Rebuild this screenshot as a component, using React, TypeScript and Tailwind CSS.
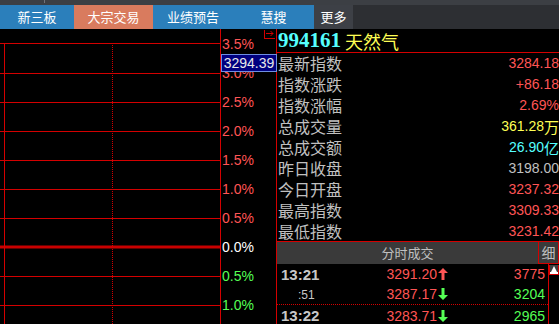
import React from "react";

const RED = "#d40000";

const tabs = [
  { name: "新三板", w: "w-[74px]", bg: "bg-[#2b7fbb]" },
  { name: "大宗交易", w: "w-[79px]", bg: "bg-[#d97b5e]" },
  { name: "业绩预告", w: "w-[80px]", bg: "bg-[#2b7fbb]" },
  { name: "慧搜", w: "w-[81px]", bg: "bg-[#2b7fbb]" },
  { name: "更多", w: "w-[39px]", bg: "bg-[#3d4046]" },
];

const axis = [
  { t: "3.5%", c: "text-[#ff5555]" },
  { t: "3.0%", c: "text-[#ff5555]" },
  { t: "2.5%", c: "text-[#ff5555]" },
  { t: "2.0%", c: "text-[#ff5555]" },
  { t: "1.5%", c: "text-[#ff5555]" },
  { t: "1.0%", c: "text-[#ff5555]" },
  { t: "0.5%", c: "text-[#ff5555]" },
  { t: "0.0%", c: "text-white" },
  { t: "0.5%", c: "text-[#55ff55]" },
  { t: "1.0%", c: "text-[#55ff55]" },
];

const stats = [
  { k: "最新指数", v: "3284.18", c: "text-[#ff5555]" },
  { k: "指数涨跌", v: "+86.18", c: "text-[#ff5555]" },
  { k: "指数涨幅", v: "2.69%", c: "text-[#ff5555]" },
  { k: "总成交量", v: "361.28", u: "万", c: "text-[#ffff55]" },
  { k: "总成交额", v: "26.90", u: "亿", c: "text-[#55ffff]" },
  { k: "昨日收盘", v: "3198.00", c: "text-[#c0c0c0]" },
  { k: "今日开盘", v: "3237.32", c: "text-[#ff5555]" },
  { k: "最高指数", v: "3309.33", c: "text-[#ff5555]" },
  { k: "最低指数", v: "3231.42", c: "text-[#ff5555]" },
];

const trades = [
  { time: "13:21", price: "3291.20", up: true, vol: "3775", volC: "text-[#ff5555]", h: "h-[20px]" },
  { time: ":51", small: true, price: "3287.17", up: false, vol: "3204", volC: "text-[#55ff55]", h: "h-[21px] border-b border-dotted border-[#d40000]" },
  { time: "13:22", price: "3283.71", up: false, vol: "2965", volC: "text-[#55ff55]", h: "h-[21px]" },
];

function Arrow({ up }: { up: boolean }) {
  const color = up ? "#ff5555" : "#55ff55";
  return (
    <svg width="10" height="12" viewBox="0 0 10 12">
      {up ? (
        <path d="M5 0 L10 5 L6.5 5 L6.5 12 L3.5 12 L3.5 5 L0 5 Z" fill={color} />
      ) : (
        <path d="M3.5 0 L6.5 0 L6.5 7 L10 7 L5 12 L0 7 L3.5 7 Z" fill={color} />
      )}
    </svg>
  );
}

function ChartGrid() {
  const ys = [14, 44, 73, 102, 131, 160, 189, 247, 276];
  return (
    <svg width="220" height="295" className="block shrink-0">
      {ys.map((y) => (
        <line key={y} x1="0" x2="220" y1={y + 0.5} y2={y + 0.5} stroke={RED} strokeWidth="1" />
      ))}
      <line x1="0" x2="220" y1="218" y2="218" stroke="#c80000" strokeWidth="3" />
      <line x1="4.5" x2="4.5" y1="14" y2="295" stroke={RED} strokeWidth="1" />
      <line x1="112.5" x2="112.5" y1="14" y2="295" stroke={RED} strokeWidth="1" strokeDasharray="1 1" />
    </svg>
  );
}

export default function App() {
  return (
    <div className="w-[559px] h-[324px] bg-black overflow-hidden flex flex-col font-['Liberation_Sans','Noto_Sans_CJK_SC',sans-serif]">
      <div className="h-[5px] bg-[#3c3f44] shrink-0 flex">
        <div className="ml-[44px] w-px h-[3px] bg-[#70737a]" />
      </div>
      <div className="h-[24px] shrink-0 flex bg-[#2d2f33] text-[13px] text-white font-['Noto_Sans_CJK_SC',sans-serif]">
        {tabs.map((t) => (
          <div key={t.name} className={`${t.w} ${t.bg} flex items-center justify-center`}>
            {t.name}
          </div>
        ))}
      </div>

      <div className="flex flex-1 min-h-0">
        <ChartGrid />

        <div className="relative w-[56px] shrink-0 border-l border-[#d40000] flex flex-col text-[14px] leading-none">
          {axis.map((a, i) => (
            <div key={i} className={`h-[29px] flex items-center pl-[1px] ${a.c}`}>
              {a.t}
            </div>
          ))}
          <div className="absolute right-[1px] top-[1px] w-[11px] h-[9px] border-l border-b border-[#d40000]">
            <svg width="10" height="8" viewBox="0 0 10 8" className="block">
              <path d="M1 3.5 H8 M5.5 1 L8 3.5 L5.5 6" stroke={RED} strokeWidth="1" fill="none" />
            </svg>
          </div>
          <div className="absolute left-0 top-[25px] w-[56px] h-[18px] bg-[#000080] border border-[#6f8fe0] flex items-center justify-center text-[14px] text-[#e8e8e8]">
            3294.39
          </div>
        </div>

        <div className="flex-1 min-w-0 border-l border-[#d40000] flex flex-col">
          <div className="h-[24px] shrink-0 border-b border-[#d40000] flex items-center gap-[4px] pl-px">
            <span className="font-['Liberation_Serif',serif] font-bold text-[21px] text-[#55ffff] leading-none">994161</span>
            <span className="font-['Noto_Sans_CJK_SC',sans-serif] text-[18px] text-[#ffff55] leading-none">天然气</span>
          </div>

          {stats.map((s) => (
            <div key={s.k} className="h-[20.9px] shrink-0 flex items-center justify-between">
              <span className="font-['Noto_Sans_CJK_SC',sans-serif] text-[16px] leading-none text-[#c0c0c0] pl-px">
                {s.k}
              </span>
              <span className={`flex items-center text-[14px] leading-none ${s.c}`}>
                {s.v}
                {s.u && <span className="font-['Noto_Sans_CJK_SC',sans-serif] text-[15px] leading-none">{s.u}</span>}
              </span>
            </div>
          ))}

          <div className="h-[23px] shrink-0 border-t border-[#d40000] bg-[#3a3a3a] flex">
            <div className="flex-1 flex items-center justify-center font-['Noto_Sans_CJK_SC',sans-serif] text-[13px] text-[#c0c0c0]">
              分时成交
            </div>
            <div className="w-[21px] border border-t-0 border-[#d40000] flex items-center justify-center font-['Noto_Sans_CJK_SC',sans-serif] text-[14px] text-[#c0c0c0]">
              细
            </div>
          </div>

          <div className="flex flex-1 min-h-0">
            <div className="flex-1 flex flex-col border-r border-[#d40000]">
              {trades.map((r, i) => (
                <div key={i} className={`${r.h} shrink-0 flex items-center text-[14px] leading-none`}>
                  <div className="w-[64px] pl-[4px] text-[#c8c8c8]">
                    {r.small ? (
                      <span className="pl-[17px] text-[12px]">{r.time}</span>
                    ) : (
                      <span className="font-bold text-[15px]">{r.time}</span>
                    )}
                  </div>
                  <div className="w-[96px] text-right text-[#ff5555]">{r.price}</div>
                  <div className="w-[12px] flex justify-center">
                    <Arrow up={r.up} />
                  </div>
                  <div className={`flex-1 text-right pr-[3px] ${r.volC}`}>{r.vol}</div>
                </div>
              ))}
            </div>
            <div className="w-[10px] shrink-0 pt-px">
              <div className="h-[10px] bg-[#404040] border border-t-0 border-[#d40000] flex items-center justify-center">
                <svg width="8" height="8" viewBox="0 0 8 8">
                  <path d="M4 0 L7 6 L1 6 Z" fill="#ffffff" />
                  <rect x="0" y="6" width="8" height="2" fill="#ffffff" />
                </svg>
              </div>
            </div>
          </div>
        </div>
      </div>
    </div>
  );
}
